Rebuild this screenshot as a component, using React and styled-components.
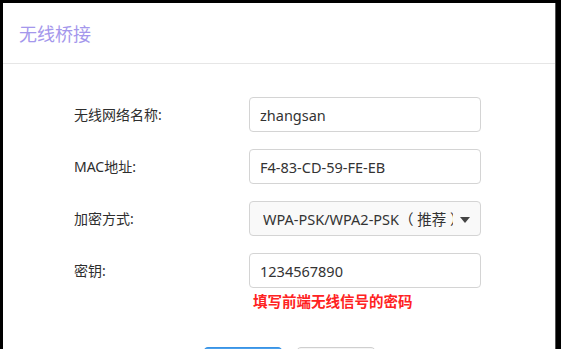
import React from "react";
import styled, { createGlobalStyle } from "styled-components";

const Global = createGlobalStyle`
  html, body { margin: 0; padding: 0; background: #000; height: 100%; overflow: hidden; }
  body { font-family: "Noto Sans", "Noto Sans CJK SC", sans-serif; }
`;

const Panel = styled.div`
  margin: 3px 5px 0 3px;
  background: #fff;
  border-right: 1px solid #555;
  height: 400px;
`;

const Header = styled.div`
  height: 60px;
  border-bottom: 1px solid #e6e6e6;
  display: flex;
  align-items: center;
  padding-left: 16px;
`;

const Title = styled.h1`
  margin: 0;
  font-size: 18px;
  font-weight: 400;
  color: #a497ec;
  font-family: "Noto Sans CJK SC", sans-serif;
`;

const Form = styled.div`
  padding: 33px 0 0 71px;
  display: flex;
  flex-direction: column;
  gap: 17px;
`;

const Row = styled.div`
  display: grid;
  grid-template-columns: 175px 232px;
  align-items: start;
`;

const Label = styled.label`
  font-size: 14px;
  color: #2e2e2e;
  line-height: 35px;
  font-family: "Noto Sans", "Noto Sans CJK SC", sans-serif;
`;

const Field = styled.div`
  display: flex;
  flex-direction: column;
`;

const Box = styled.div`
  box-sizing: border-box;
  height: 35px;
  border: 1px solid #d4d4d4;
  border-radius: 4px;
  padding: 0 ${p => (p.$select ? "27px" : "10px")} 0 ${p => (p.$select ? "13px" : "10px")};
  display: flex;
  align-items: center;
  font-size: 14.5px;
  color: #333;
  background: ${p => (p.$select ? "#f9f9f9" : "#fff")};
  position: relative;
  white-space: nowrap;
  overflow: hidden;
`;

const BoxText = styled.span`
  overflow: hidden;
  white-space: pre;
`;

const Caret = styled.span`
  position: absolute;
  right: 10px;
  top: 15px;
  width: 0;
  height: 0;
  border-left: 5px solid transparent;
  border-right: 5px solid transparent;
  border-top: 6px solid #444;
`;

const Hint = styled.div`
  margin-top: 4px;
  padding-left: 4px;
  font-size: 14.5px;
  font-weight: 700;
  color: #ff2222;
  font-family: "Noto Sans CJK SC", sans-serif;
  line-height: 18px;
`;

const Buttons = styled.div`
  display: flex;
  gap: 13px;
  padding: 37px 0 0 200px;
`;

const Button = styled.button`
  width: 80px;
  height: 32px;
  border-radius: 5px;
  border: 1px solid ${p => (p.$primary ? "#3a93e4" : "#cfcfcf")};
  background: ${p => (p.$primary ? "#4aa0ec" : "#f5f5f5")};
  color: ${p => (p.$primary ? "#fff" : "#333")};
  font-size: 14px;
`;

export default function App() {
  return (
    <>
      <Global />
      <Panel>
        <Header>
          <Title>无线桥接</Title>
        </Header>
        <Form>
          <Row>
            <Label>无线网络名称:</Label>
            <Field><Box>zhangsan</Box></Field>
          </Row>
          <Row>
            <Label>MAC地址:</Label>
            <Field><Box>F4-83-CD-59-FE-EB</Box></Field>
          </Row>
          <Row>
            <Label>加密方式:</Label>
            <Field>
              <Box $select>
                <BoxText>WPA-PSK/WPA2-PSK（ 推荐 ）</BoxText>
                <Caret />
              </Box>
            </Field>
          </Row>
          <Row>
            <Label>密钥:</Label>
            <Field>
              <Box>1234567890</Box>
              <Hint>填写前端无线信号的密码</Hint>
            </Field>
          </Row>
        </Form>
        <Buttons>
          <Button $primary>保存</Button>
          <Button>取消</Button>
        </Buttons>
      </Panel>
    </>
  );
}
